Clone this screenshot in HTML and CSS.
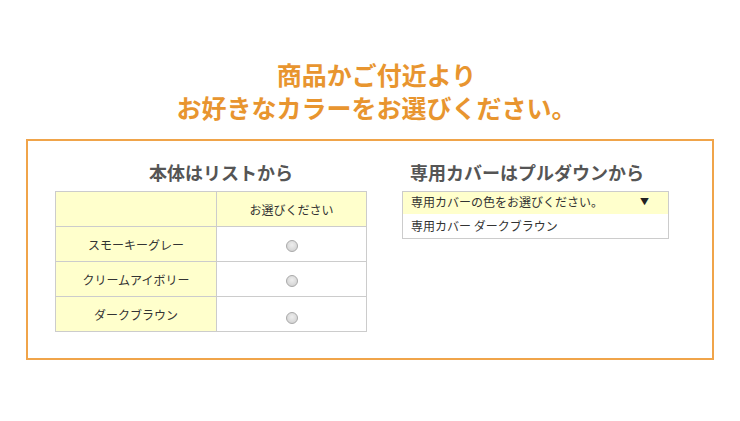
FILE: index.html
```html
<!DOCTYPE html>
<html lang="ja">
<head>
<meta charset="utf-8">
<link rel="stylesheet" href="styles.css">
</head>
<body>
<div class="page">
  <h1 class="title">商品かご付近より<br>お好きなカラーをお選びください。</h1>
  <div class="box">
    <div class="col-left">
      <h2 class="sub sub-left">本体はリストから</h2>
      <table class="list">
        <tr><th class="name"></th><th class="choice">お選びください</th></tr>
        <tr><td class="name">スモーキーグレー</td><td class="choice"><span class="radio"></span></td></tr>
        <tr><td class="name">クリームアイボリー</td><td class="choice"><span class="radio"></span></td></tr>
        <tr><td class="name">ダークブラウン</td><td class="choice"><span class="radio r3"></span></td></tr>
      </table>
    </div>
    <div class="col-right">
      <h2 class="sub sub-right">専用カバーはプルダウンから</h2>
      <div class="select">
        <div class="opt opt-head"><span>専用カバーの色をお選びください。</span><span class="arrow">▼</span></div>
        <div class="opt">専用カバー ダークブラウン</div>
      </div>
    </div>
  </div>
</div>
</body>
</html>
```
FILE: styles.css
```css
* { box-sizing: border-box; }
html, body { margin: 0; padding: 0; background: #fff; }
body { font-family: "Noto Sans CJK JP", "Noto Sans", sans-serif; color: #333; }
.page { width: 740px; padding-top: 58px; }
.title {
  margin: 0;
  padding-left: 13px;
  text-align: center;
  color: #e8952f;
  font-size: 25px;
  font-weight: bold;
  line-height: 33px;
}
.box {
  margin: 15px 0 0 26px;
  width: 688px;
  height: 221px;
  border: 2px solid #f0a44a;
  display: flex;
  padding: 0 0 0 27px;
}
.col-left { width: 347px; }
.col-right { width: 280px; }
.sub {
  margin: 0;
  font-size: 18px;
  font-weight: bold;
  color: #555;
  line-height: 24px;
  padding-top: 19px;
  height: 50px;
}
.sub-left { text-align: center; width: 332px; }
.sub-right { padding-left: 8px; }
.list {
  border-collapse: collapse;
  width: 312px;
  font-size: 12px;
  color: #333;
}
.list th, .list td {
  border: 1px solid #ccc;
  height: 35px;
  text-align: center;
  font-weight: normal;
  padding: 0;
}
.list .name { width: 161px; background: #ffffcc; }
.list .choice { background: #fff; }
.list th.choice { background: #ffffcc; }
.radio {
  display: inline-block;
  width: 12px;
  height: 12px;
  border-radius: 50%;
  border: 1px solid #aaa;
  background: radial-gradient(circle at 50% 40%, #eee, #ccc);
  vertical-align: middle;
  position: relative;
  top: 0;
}
.radio.r3 { top: 2px; }
.select {
  width: 267px;
  border: 1px solid #ccc;
  font-size: 12px;
  color: #333;
}
.opt {
  height: 24px;
  line-height: 24px;
  padding: 0 8px;
}
.opt-head {
  height: 22px;
  line-height: 20px;
  background: #ffffcc;
  display: flex;
  justify-content: space-between;
}
.arrow { font-size: 9px; color: #222; padding-right: 11px; }
```
